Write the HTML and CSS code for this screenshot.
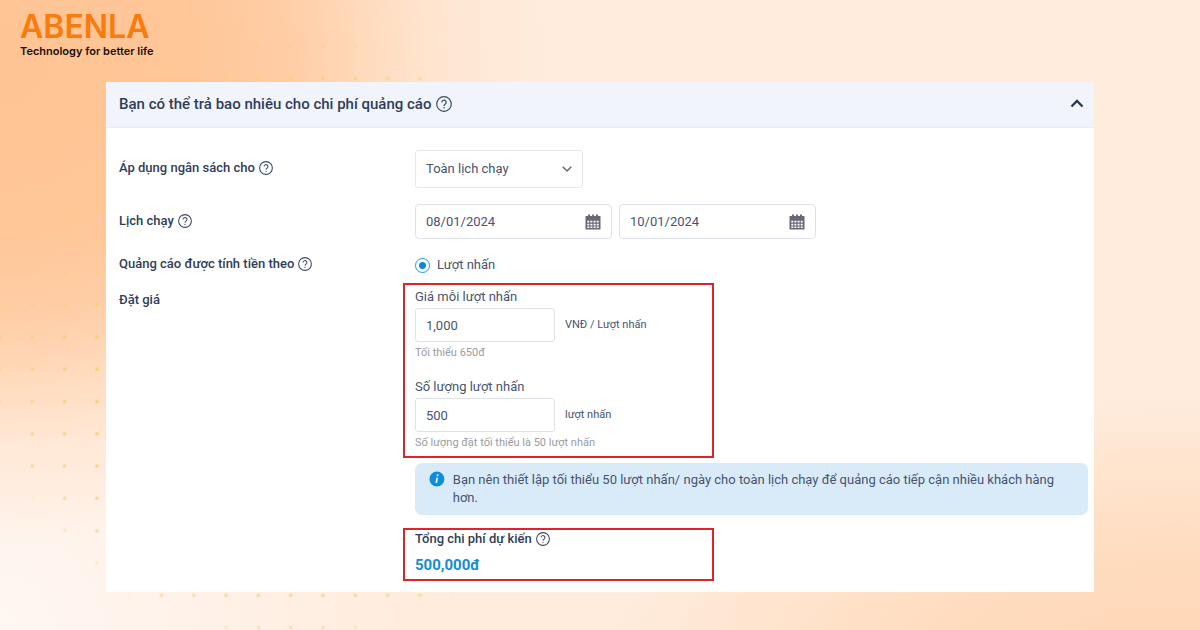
FILE: index.html
```html
<!DOCTYPE html>
<html lang="vi">
<head>
    <meta charset="UTF-8">
    <meta name="viewport" content="width=device-width, initial-scale=1.0">
    <title>ABENLA</title>
    <link rel="stylesheet" href="styles.css">
</head>
<body>
    <svg class="dots" width="640" height="640" aria-hidden="true">
        <defs>
            <pattern id="dot" width="32.3" height="32.3" patternUnits="userSpaceOnUse">
                <circle cx="16" cy="13.9" r="1.8" fill="#f6cf7a"/>
            </pattern>
            <radialGradient id="fade" gradientUnits="userSpaceOnUse" cx="290" cy="337" r="330">
                <stop offset="0" stop-color="#fff"/>
                <stop offset="0.6" stop-color="#fff"/>
                <stop offset="0.88" stop-color="#888"/>
                <stop offset="0.93" stop-color="#000"/>
            </radialGradient>
            <mask id="round">
                <rect width="640" height="640" fill="url(#fade)"/>
            </mask>
        </defs>
        <g mask="url(#round)">
            <rect width="660" height="640" fill="url(#dot)" transform="translate(-16 0)"/>
        </g>
    </svg>
    <!-- Icons -->
    <svg class="sprite" aria-hidden="true">
        <symbol id="help" viewBox="0 0 16 16">
            <circle cx="8" cy="8" r="7.3" fill="none" stroke="currentColor" stroke-width="1.2"/>
            <path d="M5.8 6.4a2.2 2.2 0 1 1 3.5 1.7C8.5 8.7 8 9 8 9.9" fill="none" stroke="currentColor" stroke-width="1.2"/>
            <circle cx="8" cy="11.8" r="0.8" fill="currentColor"/>
        </symbol>
        <symbol id="calendar" viewBox="0 0 16 16">
            <path fill="currentColor" fill-rule="evenodd" d="M3 0.5h2V2h2.1V0.5h1.8V2H11V0.5h2V2h2.5v3.5H0.5V2H3zM0.5 5.5h15v10h-15zM2.3 6.8v1.8h2V6.8zM5.4 6.8v1.8h2V6.8zM8.6 6.8v1.8h2V6.8zM11.7 6.8v1.8h2V6.8zM2.3 9.7v1.7h2V9.7zM5.4 9.7v1.7h2V9.7zM8.6 9.7v1.7h2V9.7zM11.7 9.7v1.7h2V9.7zM2.3 12.5v1.6h2v-1.6zM5.4 12.5v1.6h2v-1.6zM8.6 12.5v1.6h2v-1.6zM11.7 12.5v1.6h2v-1.6z"/>
        </symbol>
    </svg>

    <header class="logo">
        <div class="logo-name">ABENLA</div>
        <div class="logo-slogan">Technology for better life</div>
    </header>

    <main class="card">
        <div class="card-header">
            <h1>Bạn có thể trả bao nhiêu cho chi phí quảng cáo</h1>
            <svg class="help"><use href="#help"/></svg>
            <button type="button" class="collapse" aria-label="Thu gọn">
                <svg width="14" height="9" viewBox="0 0 14 9"><path d="M1.5 7.5 7 2l5.5 5.5" fill="none" stroke="currentColor" stroke-width="2.4"/></svg>
            </button>
        </div>
        <form class="card-body">
            <div class="row">
                <label class="row-label" for="budget">Áp dụng ngân sách cho <svg class="help"><use href="#help"/></svg></label>
                <div class="select">
                    <select id="budget">
                        <option>Toàn lịch chạy</option>
                    </select>
                    <svg width="10" height="6" viewBox="0 0 10 6"><path d="M0.7 0.7 5 5l4.3-4.3" fill="none" stroke="currentColor" stroke-width="1.4"/></svg>
                </div>
            </div>
            <div class="row">
                <label class="row-label" for="from">Lịch chạy <svg class="help"><use href="#help"/></svg></label>
                <div class="dates">
                    <div class="date">
                        <input type="text" id="from" value="08/01/2024">
                        <svg class="calendar"><use href="#calendar"/></svg>
                    </div>
                    <div class="date">
                        <input type="text" aria-label="Đến ngày" value="10/01/2024">
                        <svg class="calendar"><use href="#calendar"/></svg>
                    </div>
                </div>
            </div>
            <div class="row">
                <div class="row-label">Quảng cáo được tính tiền theo <svg class="help"><use href="#help"/></svg></div>
                <label class="radio"><input type="radio" name="pay" checked>Lượt nhấn</label>
            </div>
            <div class="row price">
                <div class="row-label">Đặt giá</div>
                <div>
                    <div class="mark">
                        <div class="field">
                            <label for="bid">Giá mỗi lượt nhấn</label>
                            <div class="field-line"><input type="text" id="bid" value="1,000"><span>VNĐ / Lượt nhấn</span></div>
                            <small>Tối thiểu 650đ</small>
                        </div>
                        <div class="field">
                            <label for="clicks">Số lượng lượt nhấn</label>
                            <div class="field-line"><input type="text" id="clicks" value="500"><span>lượt nhấn</span></div>
                            <small>Số lượng đặt tối thiểu là 50 lượt nhấn</small>
                        </div>
                    </div>
                    <div class="note">
                        <svg width="16" height="16" viewBox="0 0 16 16">
                            <circle cx="8" cy="8" r="7.6" fill="#0c8ee0"/>
                            <path d="M8.3 6.6 7.4 11.9" stroke="#fff" stroke-width="1.6"/>
                            <circle cx="8.7" cy="4.3" r="1" fill="#fff"/>
                        </svg>
                        <p>Bạn nên thiết lập tối thiểu 50 lượt nhấn/ ngày cho toàn lịch chạy để quảng cáo tiếp cận nhiều khách hàng hơn.</p>
                    </div>
                    <div class="mark total">
                        <div class="total-label">Tổng chi phí dự kiến <svg class="help"><use href="#help"/></svg></div>
                        <output>500,000đ</output>
                    </div>
                </div>
            </div>
        </form>
    </main>
</body>
</html>
```
FILE: styles.css
```css
* {
    box-sizing: border-box;
}
body {
    font-family: Roboto, "Noto Sans", sans-serif;
    font-size: 13px;
    line-height: 18px;
    color: #475470;
    margin: 0;
    padding: 0 106px 38px;
    min-height: 100vh;
    background:
        radial-gradient(ellipse 46% 76% at 0 10%, #ffc493 0, #ffc698 35%, #ffcda5 52%, rgba(255, 216, 184, 0.9) 66%, rgba(255, 228, 206, 0.7) 80%, rgba(255, 236, 221, 0) 100%),
        radial-gradient(ellipse 48% 45% at 98% 108%, #ffd6b4 0, #ffdcbf 45%, rgba(255, 224, 199, 0) 100%),
        radial-gradient(circle at 0 100%, #fff7f3 0, rgba(255, 247, 243, 0) 30%),
        #ffecdd;
}
.dots {
    position: absolute;
    top: 0;
    left: 0;
    height: 100vh;
    z-index: -1;
}
.sprite {
    display: none;
}

/* Logo */
.logo {
    height: 82px;
    margin-left: -86px;
    padding-top: 10px;
    font-family: Inter, sans-serif;
    font-weight: 600;
}
.logo-name {
    font-size: 32px;
    line-height: 34px;
    color: #f97b0c;
}
.logo-slogan {
    font-size: 11px;
    line-height: 14px;
    color: #17110c;
}

/* Card */
.card {
    background-color: #ffffff;
}
.card-header {
    display: flex;
    align-items: center;
    gap: 5px;
    height: 46px;
    padding: 0 10px 2px 13px;
    background-color: #f1f4fa;
    border-bottom: 1px solid #e9eef6;
    color: #2f3d5c;
}
h1 {
    margin: 0;
    font-size: 15px;
    font-weight: 500;
}
.help {
    width: 14px;
    height: 14px;
    color: #3c4966;
    flex: none;
}
.card-header .help {
    width: 16px;
    height: 16px;
}
.collapse {
    display: flex;
    margin-left: auto;
    padding: 0;
    border: none;
    background: none;
    color: #2b3a58;
    cursor: pointer;
}
.card-body {
    display: flex;
    flex-direction: column;
    gap: 16px;
    padding: 22px 6px 11px 13px;
}
.row {
    display: grid;
    grid-template-columns: 296px 1fr;
    align-items: center;
}
.row-label,
.total-label {
    display: flex;
    align-items: center;
    gap: 4px;
    font-weight: 500;
    color: #2f3d5c;
}
.row-label {
    padding-bottom: 2px;
}
.price {
    align-items: start;
    margin-top: -8px;
}
.price .row-label {
    padding-top: 8px;
}
input,
select {
    font: inherit;
    color: inherit;
    background: none;
}

/* Controls */
.select {
    display: grid;
    align-items: center;
    width: 168px;
    height: 38px;
    border: 1px solid #e7e8ec;
    border-radius: 3px;
}
.select select {
    grid-area: 1 / 1;
    width: 100%;
    height: 100%;
    padding: 0 10px;
    border: none;
    appearance: none;
}
.select svg {
    grid-area: 1 / 1;
    justify-self: end;
    margin-right: 10px;
    color: #64666e;
    pointer-events: none;
}
.dates {
    display: flex;
    gap: 7px;
}
.date {
    display: flex;
    align-items: center;
    width: 197px;
    height: 35px;
    padding: 0 10px;
    border: 1px solid #dfe2e9;
    border-radius: 4px;
}
.date input {
    flex: 1;
    min-width: 0;
    padding: 0;
    border: none;
}
.calendar {
    width: 16px;
    height: 16px;
    color: #696976;
}
.radio {
    display: flex;
    align-items: center;
    gap: 7px;
    height: 20px;
}
.radio input {
    appearance: none;
    width: 15px;
    height: 15px;
    margin: 0;
    border: 1px solid #1d97e4;
    border-radius: 50%;
    background: radial-gradient(circle, #0c86dc 0, #0c86dc 3px, transparent 4px);
}

/* Highlighted area */
.mark {
    width: 311px;
    margin-left: -12px;
    padding: 3px 10px 4px;
    border: 2px solid #e0222b;
}
.field + .field {
    margin-top: 16px;
}
.field label,
.field small {
    display: block;
}
.field-line {
    display: flex;
    align-items: center;
    gap: 10px;
    margin: 2px 0;
    font-size: 11px;
}
.field-line input {
    width: 140px;
    height: 34px;
    padding: 0 10px;
    border: 1px solid #dfe2e9;
    border-radius: 3px;
    font-size: 13px;
}
.field small {
    font-size: 11px;
    color: #9a9ba1;
}
.note {
    display: flex;
    gap: 8px;
    margin: 5px 0 13px;
    padding: 8px 14px;
    border-radius: 7px;
    background-color: #d9ebf8;
}
.note p {
    margin: 0;
}
.total {
    padding: 0 10px 5px;
}
.total output {
    display: block;
    margin-top: 8px;
    font-size: 15px;
    font-weight: 700;
    color: #168bd2;
}
```
